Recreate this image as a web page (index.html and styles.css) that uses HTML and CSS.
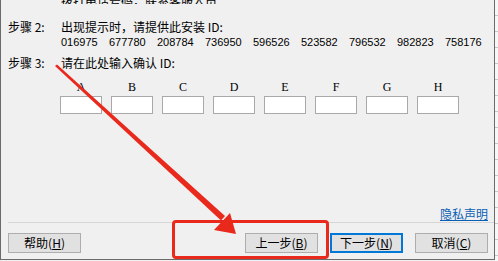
FILE: index.html
```html
<!DOCTYPE html>
<html lang="zh-CN">
<head>
    <meta charset="UTF-8">
    <meta name="viewport" content="width=device-width, initial-scale=1.0">
    <title>激活向导</title>
    <link rel="stylesheet" href="styles.css">
</head>
<body>
    <div class="page">
        <div class="window">
            <div class="main">
                <div class="cut">
                    <div class="cut-text">拨打电话号码，联系客服人员</div>
                </div>

                <div class="step">
                    <span class="step-label">步骤 2:</span>
                    <span>出现提示时，请提供此安装 ID:</span>
                </div>
                <div class="ids">
                    <span>016975</span>
                    <span>677780</span>
                    <span>208784</span>
                    <span>736950</span>
                    <span>596526</span>
                    <span>523582</span>
                    <span>796532</span>
                    <span>982823</span>
                    <span>758176</span>
                </div>

                <div class="step step-three">
                    <span class="step-label">步骤 3:</span>
                    <span>请在此处输入确认 ID:</span>
                </div>
                <div class="boxes">
                    <label class="box-col"><span class="box-letter">A</span><input class="box" type="text"></label>
                    <label class="box-col"><span class="box-letter">B</span><input class="box" type="text"></label>
                    <label class="box-col"><span class="box-letter">C</span><input class="box" type="text"></label>
                    <label class="box-col"><span class="box-letter">D</span><input class="box" type="text"></label>
                    <label class="box-col"><span class="box-letter">E</span><input class="box" type="text"></label>
                    <label class="box-col"><span class="box-letter">F</span><input class="box" type="text"></label>
                    <label class="box-col"><span class="box-letter">G</span><input class="box" type="text"></label>
                    <label class="box-col"><span class="box-letter">H</span><input class="box" type="text"></label>
                </div>
            </div>

            <div class="privacy"><a href="#">隐私声明</a></div>
            <div class="separator"></div>

            <div class="buttons">
                <button class="btn">帮助(<u>H</u>)</button>
                <div class="spacer"></div>
                <button class="btn">上一步(<u>B</u>)</button>
                <button class="btn btn-default">下一步(<u>N</u>)</button>
                <button class="btn">取消(<u>C</u>)</button>
            </div>
        </div>
        <div class="edge"></div>

        <!-- red annotation on top of the dialog -->
        <div class="callout"></div>
        <svg class="arrow" width="498" height="261" viewBox="0 0 498 261">
            <polygon points="55,66 57,64.5 225,216 221,220.5" fill="#e8291c"/>
            <polygon points="236,234 214,230 230,213" fill="#e8291c"/>
        </svg>
    </div>
</body>
</html>
```

FILE: styles.css
```css
body {
    margin: 0;
    background: #f0f0f0;
    font-family: "Noto Sans CJK SC", sans-serif;
    font-size: 12px;
    color: #000;
}
.page {
    position: relative;
    display: flex;
    width: 498px;
    height: 261px;
    overflow: hidden;
}
.window {
    display: flex;
    flex-direction: column;
    box-sizing: border-box;
    width: 495px;
    height: 260px;
    border-left: 1px solid #6b6b6b;
    border-right: 1px solid #6b6b6b;
    border-bottom: 1px solid #6b6b6b;
    background: #f0f0f0;
}
.edge {
    flex: 1;
    background: repeating-linear-gradient(to bottom, #f7f7f7 0, #f7f7f7 15px, #c8c8c8 15px, #c8c8c8 16px);
}
.main {
    flex: 1;
}
.cut {
    display: flex;
    align-items: flex-end;
    height: 4px;
    overflow: hidden;
    padding-left: 60px;
}
.cut-text {
    flex: none;
    line-height: 12px;
    margin-bottom: -3px;
}
.step {
    display: flex;
    margin-top: 15px;
    padding-left: 7px;
    line-height: 16px;
}
.step-label {
    width: 53px;
}
.step-three {
    margin-top: 5px;
}
.ids {
    display: grid;
    grid-template-columns: repeat(9, 48px);
    padding-left: 60px;
    line-height: 15px;
    font-family: "Liberation Sans", sans-serif;
    font-size: 11px;
}
.boxes {
    display: grid;
    grid-template-columns: repeat(8, 42px);
    column-gap: 9px;
    margin-top: 8px;
    padding-left: 59px;
}
.box-col {
    display: flex;
    flex-direction: column;
    align-items: center;
}
.box-letter {
    line-height: 16px;
    margin-bottom: 1px;
    font-family: "Liberation Serif", serif;
    font-size: 12px;
}
.box {
    box-sizing: border-box;
    width: 42px;
    height: 18px;
    margin: 0;
    border: 1px solid #a9a9a9;
    background: #fff;
    outline: none;
}
.privacy {
    display: flex;
    justify-content: flex-end;
    padding-right: 6px;
    line-height: 16px;
}
.privacy a {
    color: #0a5fb4;
    text-decoration: underline;
}
.separator {
    height: 1px;
    margin: 0 0 10px 7px;
    background: #d6d6d6;
}
.buttons {
    display: flex;
    gap: 12px;
    padding: 0 6px 6px 7px;
}
.spacer {
    flex: 1;
}
.btn {
    box-sizing: border-box;
    width: 73px;
    height: 20px;
    padding: 0;
    border: 1px solid #adadad;
    background: #e1e1e1;
    font-family: "Noto Sans CJK SC", sans-serif;
    font-size: 12px;
    line-height: 16px;
    color: #000;
}
.btn u {
    text-underline-offset: 1px;
}
.btn-default {
    border: 2px solid #0078d7;
}
.callout {
    position: absolute;
    left: 172px;
    top: 220px;
    width: 157px;
    height: 39px;
    box-sizing: border-box;
    border: 3px solid #e8291c;
    border-radius: 4px;
}
.arrow {
    position: absolute;
    left: 0;
    top: 0;
}
```
